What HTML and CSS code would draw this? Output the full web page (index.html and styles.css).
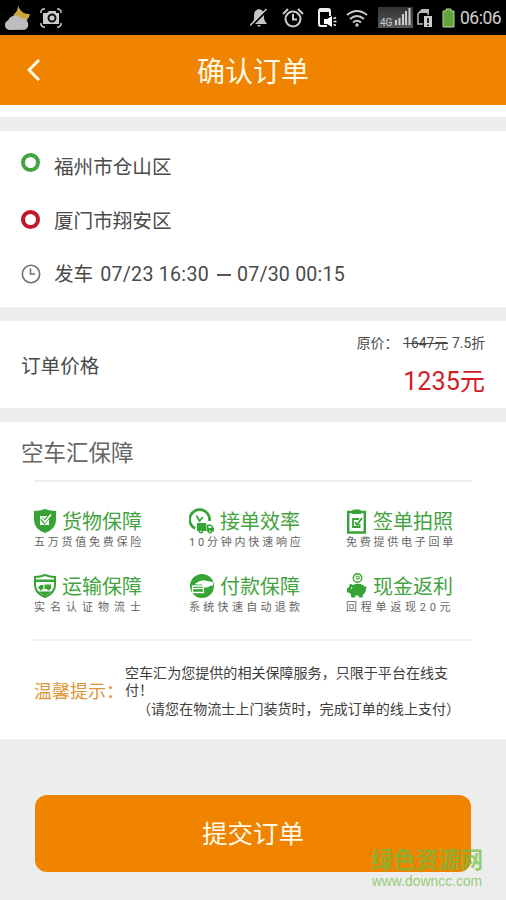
FILE: index.html
```html
<!DOCTYPE html>
<html lang="zh-CN">
<head>
<meta charset="utf-8">
<title>确认订单</title>
<link rel="stylesheet" href="styles.css">
</head>
<body>
<div class="status">
  <svg class="weather" width="27" height="28" viewBox="0 0 27 28"><path d="M15 1c1 4 5 10 12 9-1 5-4 7-7 9l-10-8c3-2 5-5 5-10z" fill="#c9a63c"/><path d="M6 26a5 5 0 0 1-1-9.500a8 7 0 0 1 14-2a6 6 0 0 1 3 11.300z" fill="#bdbdbd"/></svg>
  <svg class="shot" width="22" height="20" viewBox="0 0 22 20"><path d="M1 5V3l2-2h2M17 1h2l2 2v2M21 15v2l-2 2h-2M5 19H3l-2-2v-2" fill="none" stroke="#ccc" stroke-width="1.500"/><path d="M3 5h4l2-2h7v2h3v11H3z" fill="#ccc"/><circle cx="12" cy="10" r="3.500" fill="none" stroke="#111" stroke-width="2"/></svg>
  <svg class="bell" width="18" height="20" viewBox="0 0 18 20"><path d="M9 1c4 1 5 3 5 8 0 4 2 5 3 7H1c2-2 3-3 3-7 0-5 1-7 5-8zM7 17h4l-2 2z" fill="#c4c4c4"/><path d="M1 18.500L18 1.500" stroke="#000" stroke-width="2"/><path d="M0 17.500L16.500 1" stroke="#ccc" stroke-width="1.500"/></svg>
  <svg class="alarm" width="22" height="20" viewBox="0 0 22 20"><g fill="none" stroke="#ccc" stroke-width="2"><circle cx="11" cy="11" r="7.500"/><path d="M11 6v5.500h4M1 6l5-5M16 1l5 5" /></g></svg>
  <svg class="phone" width="19" height="20" viewBox="0 0 19 20"><path d="M9 18H3a2 2 0 0 1-2-2V3a2 2 0 0 1 2-2h7a2 2 0 0 1 2 2v5" fill="none" stroke="#eee" stroke-width="2"/><path d="M1 2h11v2H1z" fill="#eee"/><path d="M6 11h3l5-3v11l-5-3H6z" fill="#fff"/><path d="M15.500 10.500l2.500-1M15.500 13.500H18.500M15.500 16.500l2.500 1" stroke="#eee" stroke-width="1.500"/></svg>
  <svg class="wifi" width="22" height="18" viewBox="0 0 22 18"><g fill="none" stroke="#ccc" stroke-width="2"><path d="M1 6q10-8 20 0M4 10q7-6 14 0M7 13.500q4-3.500 8 0"/></g><circle cx="11" cy="16" r="1.700" fill="#ccc"/></svg>
  <div class="signal"><span>4G</span><svg width="17" height="17" viewBox="0 0 17 17"><path d="M1 12h2v5H1zM4.500 10h2v7h-2zM8 6h2v11H8zM11 3h2v14h-2zM14.500 0h2v17h-2z" fill="#ccc"/></svg></div>
  <svg class="sim" width="16" height="20" viewBox="0 0 16 20"><path d="M6 16H1V6l4-4h6v5" fill="none" stroke="#bbb" stroke-width="1.500"/><path d="M1 5l4-4h7v4z" fill="#bbb"/><path d="M7 8h8v11H7z" fill="#ccc"/><path d="M11 10v5M11 16.500v1.500" stroke="#222" stroke-width="2"/></svg>
  <svg class="battery" width="13" height="20" viewBox="0 0 13 20"><path d="M4 3V1h5v2h3v16H1V3z" fill="#62a53b" stroke="#b7d5a3"/></svg>
  <span class="clock">06:06</span>
</div>
<header class="header">
  <svg class="back" width="14" height="22" viewBox="0 0 14 22"><path d="M12 1L2 11l10 10" fill="none" stroke="#fffbe8" stroke-width="3"/></svg>
  <h1>确认订单</h1>
</header>
<section class="route">
  <div class="line"><i class="ring"></i><span>福州市仓山区</span></div>
  <div class="line"><i class="ring red"></i><span>厦门市翔安区</span></div>
  <div class="line time"><svg width="20" height="20" viewBox="0 0 20 20"><g fill="none" stroke="#707070" stroke-width="1.600"><circle cx="10" cy="10" r="8.700"/><path d="M9.500 4.500V10H14"/></g></svg><span>发车</span><span class="date">07/23 16:30</span><i class="dash"></i><span class="date-end">07/30 00:15</span></div>
</section>
<section class="price">
  <span class="price-name">订单价格</span>
  <div class="price-values">
    <div class="old"><span>原价：</span><s>1647元</s><span class="off">7.5折</span></div>
    <div class="now">1235元</div>
  </div>
</section>
<section class="guarantee">
  <h2>空车汇保障</h2>
  <div class="grid">
    <div class="item">
      <div class="name"><svg width="24" height="26" viewBox="0 0 24 26"><path d="M11 1q5 2 11 2v9q0 9-11 13Q0 21 0 12V3q6 0 11-2z" fill="#36a335"/><path d="M6 8h9v9H6z" fill="#fff"/><path d="M7.500 10.500l3 3.500 6.500-8" fill="none" stroke="#36a335" stroke-width="3.500"/><path d="M8 10.500l2.800 3.500L17 6.500" fill="none" stroke="#fff" stroke-width="1.700"/></svg><b>货物保障</b></div>
      <p class="s8">五万货值免费保险</p>
    </div>
    <div class="item">
      <div class="name wide"><svg width="26" height="26" viewBox="0 0 26 26"><path d="M6 20.500A10 10 0 1 1 20.500 13" fill="none" stroke="#36a335" stroke-width="2.800"/><path d="M7.500 7.500l3 5.500 3.500-4" fill="none" stroke="#36a335" stroke-width="1.600"/><path d="M8 15h9v8H8zM17.500 16.500H22l3 3.500v3.500h-7.500z" fill="#36a335"/><path d="M19.500 18h2l1.500 2h-3.500z" fill="#fff"/><g fill="#36a335"><circle cx="12" cy="23.200" r="2.200"/><circle cx="21" cy="23.200" r="2.200"/></g><g fill="#fff"><circle cx="12" cy="23.200" r=".8"/><circle cx="21" cy="23.200" r=".8"/></g></svg><b>接单效率</b></div>
      <p class="s9">10分钟内快速响应</p>
    </div>
    <div class="item">
      <div class="name third"><svg width="22" height="26" viewBox="0 0 22 26"><path d="M2.200 4h16.600v20.500H2.200z" fill="none" stroke="#36a335" stroke-width="2.400"/><path d="M6 6V3q0-1.500 2-1.500h5q2 0 2 1.500v3z" fill="#36a335"/><path d="M13.500 16v3H7v-8h6M9 14l2 3 5-7" fill="none" stroke="#36a335" stroke-width="1.800"/></svg><b>签单拍照</b></div>
      <p class="s8">免费提供电子回单</p>
    </div>
    <div class="item">
      <div class="name"><svg width="24" height="26" viewBox="0 0 24 26"><path d="M11 2q5 2 10 2v8q0 8-10 12Q1 20 1 12V4q5 0 10-2z" fill="#fff" stroke="#36a335" stroke-width="2"/><path d="M2 6.500h18V9H2zM4 18.500h14L11 23z" fill="#36a335"/><path d="M4.500 16v-2l2-2h3v4zM10.500 11.500H17V16h-6.500z" fill="#36a335"/><g fill="#36a335"><circle cx="7" cy="16.300" r="1.200"/><circle cx="14.500" cy="16.300" r="1.200"/></g></svg><b>运输保障</b></div>
      <p class="s7">实名认证物流士</p>
    </div>
    <div class="item">
      <div class="name wide"><svg width="26" height="26" viewBox="0 0 26 26"><circle cx="13" cy="13" r="12" fill="#36a335"/><path d="M3.500 13h11v6.500h-11z" fill="#36a335" stroke="#fff" stroke-width="1.300"/><path d="M3 15.500h11.500" stroke="#fff" stroke-width="1.300"/><path d="M6 10.500l5-2.500q4-1.500 7 0l6 1v3.500l-3 .5q-3 2.500-6 1l-2-2.500H7z" fill="#fff"/></svg><b>付款保障</b></div>
      <p class="s8 auto">系统快速自动退款</p>
    </div>
    <div class="item">
      <div class="name third"><svg width="22" height="26" viewBox="0 0 22 26"><circle cx="11.500" cy="5" r="4.200" fill="none" stroke="#36a335" stroke-width="1.400"/><path d="M13.500 3.500q-4-1-3.500.700t3 1-3 1.300" fill="none" stroke="#36a335"/><path d="M4 10.500l3 1.500q5-2.500 10 0l2 2 1.500-1-.5 4q-.5 3-3 4.500l-.5 3h-3.500l-.5-2H9.500L9 24.500H5.500l-1-4-2-1H1v-4l2-1.500z" fill="#36a335"/><circle cx="5.500" cy="15" r=".8" fill="#fff"/></svg><b>现金返利</b></div>
      <p class="s8 cash">回程单返现20元</p>
    </div>
  </div>
  <div class="tips">
    <strong>温馨提示：</strong>
    <div class="tips-text"><p>空车汇为您提供的相关保障服务，只限于平台在线支<br>付！</p><p class="note">（请您在物流士上门装货时，完成订单的线上支付）</p></div>
  </div>
</section>
<footer class="footer">
  <button class="submit">提交订单</button>
  <div class="mark"><b>绿色资源网</b><span>www.downcc.com</span></div>
</footer>
</body>
</html>
```
FILE: styles.css
```css
* { box-sizing: border-box; }
body {
  margin: 0;
  width: 506px;
  height: 900px;
  overflow: hidden;
  background: #ededed;
  color: #4a4a4a;
  font-family: Roboto, "Noto Sans CJK SC", sans-serif;
}
h1, h2, p { margin: 0; font-weight: 400; }
svg { display: block; flex: none; }
i { font-style: normal; flex: none; }

.status { height: 35px; background: #000; display: flex; align-items: center; padding-left: 3px; }
.shot { margin-left: 10px; }
.bell { margin-left: 188px; }
.alarm { margin-left: 14px; }
.phone { margin-left: 14px; }
.wifi { margin-left: 9px; }
.signal { margin-left: 10px; width: 35px; height: 21px; background: linear-gradient(#333, #5a5a5a); display: flex; align-items: flex-end; padding: 0 0 1px 2px; color: #ccc; font-size: 10px; line-height: 9px; }
.signal svg { margin-left: 2px; margin-bottom: 2px; }
.sim { margin-left: 4px; }
.battery { margin-left: 9px; }
.clock { margin-left: 5px; font-size: 17.500px; letter-spacing: -.5px; color: #d0d0d0; white-space: nowrap; }

.header { height: 70px; background: #f08300; display: grid; grid-template-columns: 27px 14px 1fr 41px; align-items: center; }
.back { grid-column: 2; }
.header h1 { grid-column: 3; text-align: center; color: #fffbe8; font-size: 28px; line-height: 40px; padding-top: 5px; }

.route { height: 202px; padding: 26px 21px 0; background: linear-gradient(#fff 12px, #ededed 12px, #ededed 26px, #fff 26px); }
.line { height: 54px; display: flex; align-items: center; font-size: 19.600px; line-height: 28px; white-space: nowrap; }
.line:first-child { margin-top: 10px; }
.line.time { height: 52px; }
.line svg { margin-right: 13px; margin-bottom: 2px; }
.ring { width: 19px; height: 19px; border: 4px solid #43a340; border-radius: 50%; margin-right: 14px; margin-bottom: 11px; }
.ring.red { border-color: #c2162a; margin-bottom: 5px; }
.date { margin-left: 7px; letter-spacing: .27px; }
.date-end { letter-spacing: .2px; }
.dash { width: 14px; height: 1.500px; background: #555; margin: 0 6px 0 8px; }

.price { margin-top: 14px; height: 87px; background: #fff; padding: 0 21px; display: flex; justify-content: space-between; }
.price-name { font-size: 19.600px; line-height: 91px; }
.price-values { padding-top: 11px; text-align: right; }
.old { font-size: 13.800px; line-height: 23px; display: flex; justify-content: flex-end; }
.off { margin-left: 4px; }
.old s { margin-left: 5px; }
.now { color: #d01e24; font-size: 25.200px; line-height: 36px; margin-top: 9px; }

.guarantee { margin-top: 14px; height: 317px; background: #fff; }
.guarantee h2 { padding-left: 21px; font-size: 22.500px; line-height: 62px; height: 58px; color: #666; }
.grid { margin: 0 34px; width: 438px; border-top: 2px solid #f0f0f0; border-bottom: 2px solid #f0f0f0; height: 161px; padding-top: 26px; display: grid; grid-template-columns: 155px 157px 126px; grid-template-rows: 65px 65px; }
.name { display: flex; align-items: center; height: 26px; }
.name b { font-weight: 400; font-size: 20px; line-height: 26px; padding-top: 2px; color: #43a340; margin-left: 4px; white-space: nowrap; }
.name.wide b, .name.third b { margin-left: 5px; }
.item p { font-size: 11px; line-height: 18px; color: #666; white-space: nowrap; }
.s8 { letter-spacing: 2.750px; }
.s9 { letter-spacing: 2.800px; }
.s7 { letter-spacing: 5px; }
.auto { letter-spacing: 3.300px; }
.item .cash { letter-spacing: 3.750px; }
.tips { padding-left: 34px; display: flex; height: 97px; }
.tips strong { width: 91px; font-weight: 400; font-size: 18px; color: #dc9636; white-space: nowrap; line-height: 28px; padding-top: 37px; }
.tips-text { font-size: 14.050px; line-height: 17px; color: #3d3d3d; padding-top: 24px; white-space: nowrap; }
.note { margin-top: 2px; padding-left: 12px; }

.footer { position: relative; padding: 56px 35px 0; }
.submit { display: block; width: 436px; height: 77px; border: 0; border-radius: 12px; background: #f08300; color: #fffbe8; font: 400 25.500px/77px Roboto, "Noto Sans CJK SC", sans-serif; padding: 1px 0 0; }
.mark { position: absolute; right: 22px; top: 108px; width: 114px; color: rgba(113, 190, 62, .72); text-align: center; white-space: nowrap; }
.mark b { display: block; font-size: 22.500px; line-height: 27px; font-weight: 700; }
.mark span { display: block; font: 13.900px/14px "Liberation Sans", sans-serif; }
```
